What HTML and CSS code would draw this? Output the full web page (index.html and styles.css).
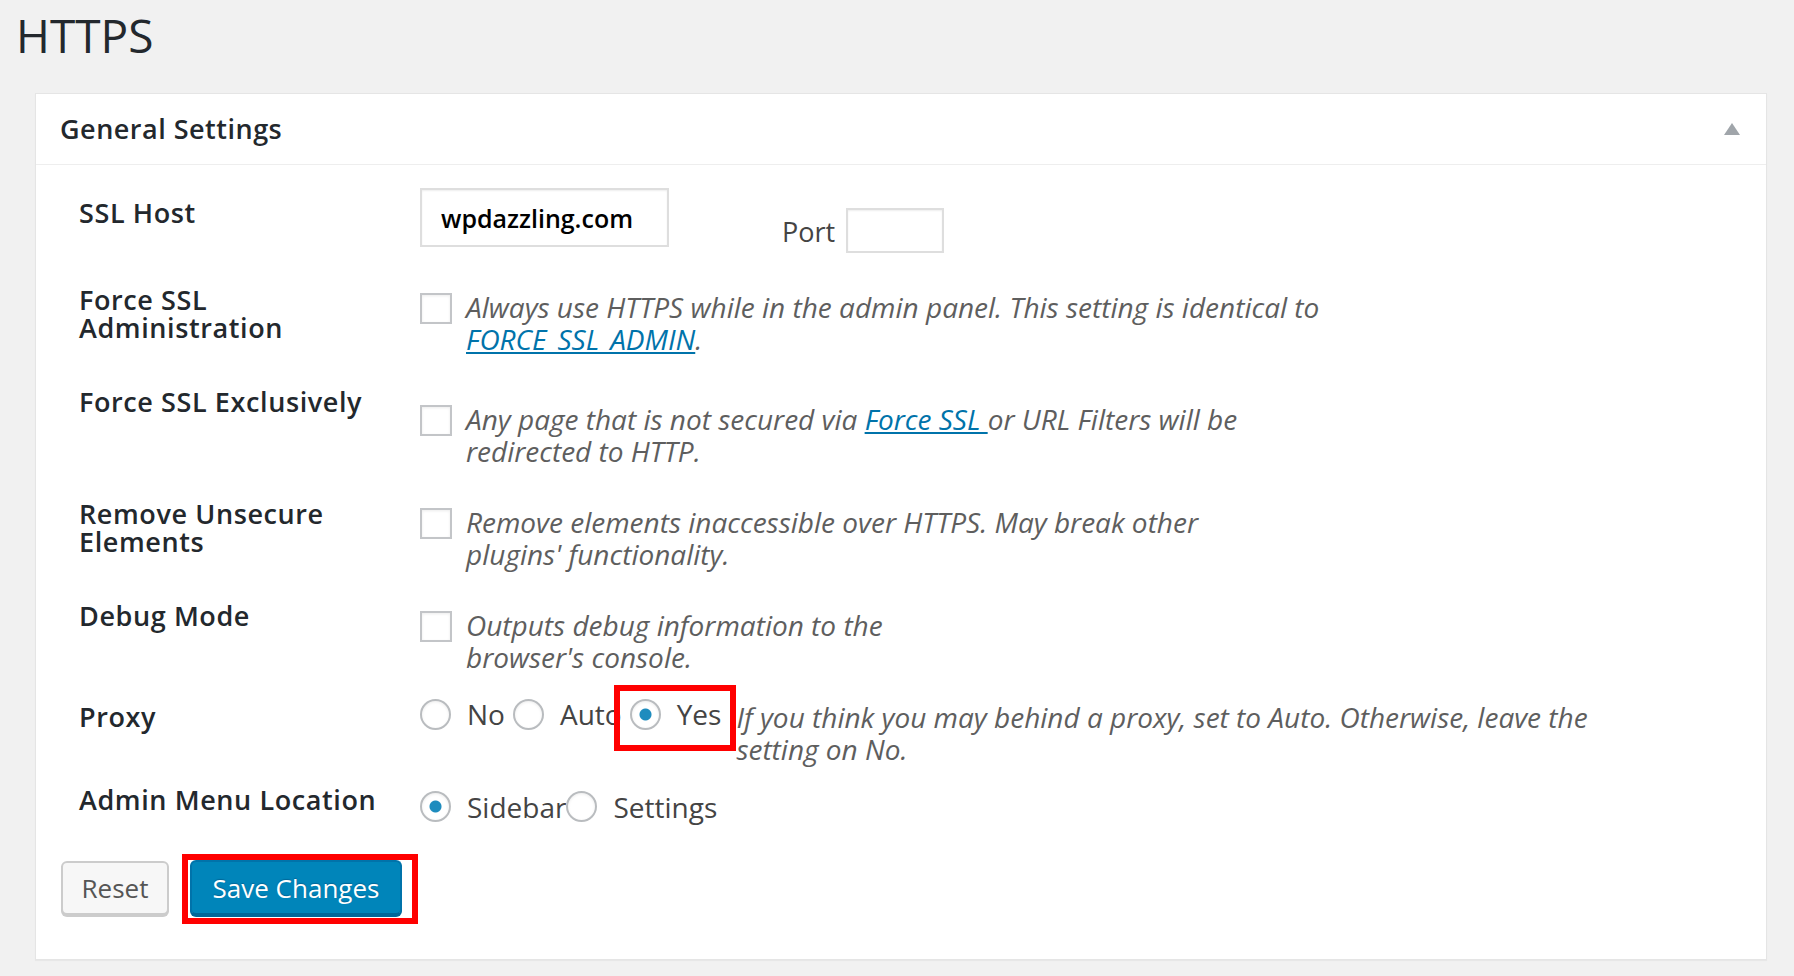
FILE: index.html
```html
<!DOCTYPE html>
<html lang="en">
<head>
<meta charset="utf-8">
<title>HTTPS</title>
<link rel="stylesheet" href="styles.css">
</head>
<body>
<div class="wrap">
  <h1 class="page-title">HTTPS</h1>
  <div class="postbox">
    <div class="postbox-header">
      <h2 class="hndle">General Settings</h2>
      <svg class="toggle" width="16" height="12" viewBox="0 0 16 12" aria-hidden="true"><path d="M8 0 L16 12 L0 12 Z" fill="#a0a5aa"/></svg>
    </div>
    <div class="inside">
      <div class="form">
        <div class="lbl lbl--host">SSL Host</div>
        <div class="fld fld--host">
          <input type="text" class="text-input host-input" value="wpdazzling.com">
          <div class="port">
            <span class="port-label">Port</span>
            <input type="text" class="text-input port-input" value="">
          </div>
        </div>

        <div class="lbl lbl--admin-ssl">Force SSL<br>Administration</div>
        <div class="fld check-field fld--admin-ssl">
          <input type="checkbox" class="cb">
          <p class="desc">Always use HTTPS while in the admin panel. This setting is identical to<br><a href="#">FORCE_SSL_ADMIN</a>.</p>
        </div>

        <div class="lbl">Force SSL Exclusively</div>
        <div class="fld check-field fld--exclusive">
          <input type="checkbox" class="cb">
          <p class="desc">Any page that is not secured via <a href="#">Force SSL </a>or URL Filters will be<br>redirected to HTTP.</p>
        </div>

        <div class="lbl">Remove Unsecure<br>Elements</div>
        <div class="fld check-field fld--unsecure">
          <input type="checkbox" class="cb">
          <p class="desc">Remove elements inaccessible over HTTPS. May break other<br>plugins' functionality.</p>
        </div>

        <div class="lbl">Debug Mode</div>
        <div class="fld check-field fld--debug">
          <input type="checkbox" class="cb">
          <p class="desc">Outputs debug information to the<br>browser's console.</p>
        </div>

        <div class="lbl lbl--proxy">Proxy</div>
        <div class="fld radio-field fld--proxy">
          <label class="opt"><input type="radio" class="rd" name="proxy"><span>No</span></label>
          <label class="opt"><input type="radio" class="rd" name="proxy"><span>Auto</span></label>
          <label class="opt opt--marked"><input type="radio" class="rd" name="proxy" checked><span>Yes</span><span class="mark" aria-hidden="true"></span></label>
          <p class="desc desc--proxy">If you think you may behind a proxy, set to Auto. Otherwise, leave the<br>setting on No.</p>
        </div>

        <div class="lbl">Admin Menu Location</div>
        <div class="fld radio-field fld--menu">
          <label class="opt opt--tight"><input type="radio" class="rd" name="menu" checked><span>Sidebar</span></label>
          <label class="opt"><input type="radio" class="rd" name="menu"><span>Settings</span></label>
        </div>
      </div>

      <div class="actions">
        <button type="button" class="btn btn--reset">Reset</button>
        <span class="annot"><button type="button" class="btn btn--primary">Save Changes</button></span>
      </div>
    </div>
  </div>
</div>
</body>
</html>
```
FILE: styles.css
```css
* { box-sizing: border-box; }

html, body { margin: 0; padding: 0; }

body {
  background: #f1f1f1;
  font-family: "Open Sans", "Liberation Sans", sans-serif;
  color: #444;
  width: 1794px;
  height: 976px;
  overflow: hidden;
}

.wrap { padding: 5px 27px 0 16px; }

.page-title {
  margin: 0;
  font-size: 46px;
  font-weight: 400;
  line-height: 60px;
  color: #23282d;
}

.postbox {
  margin: 28px 0 0 19px;
  background: #fff;
  border: 1px solid #e5e5e5;
  box-shadow: 0 1px 1px rgba(0, 0, 0, .04);
}

.postbox-header {
  display: flex;
  align-items: center;
  justify-content: space-between;
  height: 71px;
  padding: 0 26px 0 24px;
  border-bottom: 1px solid #eee;
}

.hndle {
  margin: 0;
  font-size: 27px;
  font-weight: 600;
  letter-spacing: 0.5px;
  line-height: 36px;
  color: #23282d;
}

.toggle { display: block; }

.inside { padding: 23px 0 35px 0; }

.form {
  display: grid;
  grid-template-columns: 341px 1fr;
  grid-template-rows: 99.5px 100px 112px 102px 96.5px 87.5px 74.5px;
  margin-left: 43px;
}

.lbl {
  font-size: 27px;
  font-weight: 600;
  letter-spacing: 0.6px;
  line-height: 28.5px;
  color: #23282d;
  white-space: nowrap;
}
.lbl--host { margin-top: 10.5px; }
.lbl--admin-ssl { margin-top: -2px; }
.lbl--proxy { margin-top: 4.5px; }

.fld { display: flex; align-items: flex-start; }
.fld--admin-ssl { padding-top: 3.5px; }
.fld--exclusive { padding-top: 15.5px; }
.fld--unsecure { padding-top: 6.5px; }
.fld--debug { padding-top: 7.5px; }
.fld--proxy { padding-top: 0; }
.fld--menu { padding-top: 5px; }

.text-input {
  margin: 0;
  background: #fff;
  border: 2px solid #dedede;
  box-shadow: inset 0 1px 2px rgba(0, 0, 0, .07);
  outline: none;
  border-radius: 0;
}

.host-input {
  width: 249px;
  height: 59px;
  padding: 0 0 0 19px;
  font-family: "Open Sans", sans-serif;
  font-size: 25px;
  font-weight: 600;
  color: #000;
}

.port {
  display: flex;
  align-items: flex-start;
  margin: 20px 0 0 113px;
}

.port-label {
  font-size: 27px;
  line-height: 32px;
  margin-top: 7.5px;
  color: #444;
}

.port-input {
  width: 98px;
  height: 45px;
  margin-left: 11px;
}

.cb {
  appearance: none;
  -webkit-appearance: none;
  flex: none;
  width: 32px;
  height: 31px;
  margin: 2px 0 0 0;
  background: #fff;
  border: 2px solid #c3c5c8;
  box-shadow: inset 0 1px 3px rgba(0, 0, 0, .08);
}

.desc {
  margin: 0 0 0 14px;
  font-size: 28px;
  font-style: italic;
  line-height: 32px;
  color: #5e5e5e;
  white-space: nowrap;
}

.desc a { color: #0073aa; text-decoration: underline; }

.opt {
  position: relative;
  display: inline-flex;
  align-items: center;
  gap: 16px;
  margin-right: 8px;
  font-size: 28px;
  line-height: 32px;
  color: #444;
}
.opt--tight { margin-right: 0; }

.rd {
  appearance: none;
  -webkit-appearance: none;
  flex: none;
  width: 31px;
  height: 31px;
  margin: 0;
  border-radius: 50%;
  background: #fff;
  border: 2px solid #b9bcbf;
  box-shadow: inset 0 1px 3px rgba(0, 0, 0, .08);
}
.rd:checked {
  background: radial-gradient(circle, #1e8cbe 0 5.5px, #fff 6.5px);
}

.mark {
  position: absolute;
  left: -16px;
  top: -13px;
  width: 122px;
  height: 66px;
  border: 6px solid #ff0000;
}

.desc--proxy { margin: 3px 0 0 7px; }

.actions {
  display: flex;
  align-items: flex-start;
  margin-left: 25px;
}

.btn {
  font-family: "Open Sans", sans-serif;
  font-size: 26px;
  line-height: 1;
  border-radius: 6px;
  cursor: pointer;
  margin: 0;
}

.btn--reset {
  width: 108px;
  height: 54px;
  margin-top: 1px;
  background: #f7f7f7;
  color: #555;
  border: 2px solid #cccccc;
  box-shadow: 0 2px 0 #cccccc;
}

.annot {
  display: inline-flex;
  margin: -6px 0 0 13px;
  padding: 0 10px 3px 2px;
  border: 6px solid #ff0000;
}

.btn--primary {
  width: 212px;
  height: 55px;
  background: #0085ba;
  color: #fff;
  border: 2px solid #0073aa;
  border-bottom-color: #006799;
  box-shadow: 0 2px 0 #006799;
  text-shadow: 0 -1px 1px #006799;
}
```
